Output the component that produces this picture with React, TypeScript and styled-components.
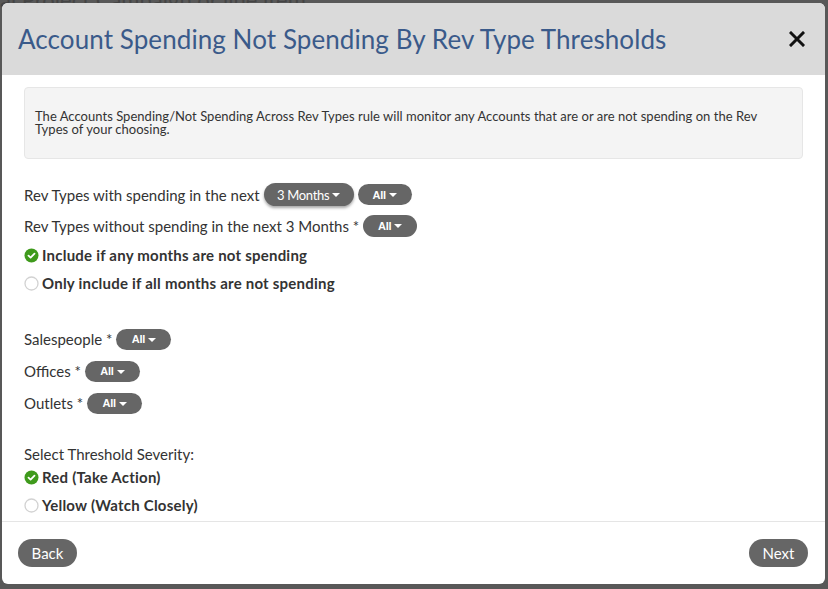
import React from "react";
import styled, { createGlobalStyle } from "styled-components";

const Global = createGlobalStyle`
  html, body { margin: 0; padding: 0; }
  body { background: #5a5a5a; font-family: Lato, "Open Sans", sans-serif; color: #333; overflow: hidden; }
`;

const Backdrop = styled.div`
  position: relative;
  width: 828px;
  height: 589px;
  box-sizing: border-box;
  padding: 3px 3px 5px 2px;
  background: #585858;
  display: flex;
`;

const BehindText = styled.div`
  position: absolute;
  left: 0;
  top: -14px;
  font-size: 22px;
  color: #444;
  white-space: nowrap;
`;

const Modal = styled.div`
  position: relative;
  flex: 1;
  display: flex;
  flex-direction: column;
  background: #fff;
  border-radius: 6px;
  overflow: hidden;
`;

const Header = styled.div`
  height: 72px;
  flex: none;
  background: #dadada;
  display: flex;
  align-items: center;
  justify-content: space-between;
  padding: 0 18px 0 16px;
`;

const Title = styled.h1`
  margin: 0;
  font-family: Lato, sans-serif;
  font-weight: 400;
  font-size: 26px;
  color: #3a5a8a;
  letter-spacing: 0.08px;
`;

const Close = styled.button`
  border: 0;
  background: none;
  padding: 0;
  width: 20px;
  height: 20px;
  display: flex;
  align-items: center;
  justify-content: center;
  cursor: pointer;
`;

const Body = styled.div`
  flex: 1;
  padding: 12px 22px 0 22px;
  display: flex;
  flex-direction: column;
`;

const Info = styled.div`
  height: 72px;
  box-sizing: border-box;
  background: #f4f4f4;
  border: 1px solid #e6e6e6;
  border-radius: 4px;
  padding: 22px 10px 0 10px;
  font-size: 13px;
  line-height: 13px;
  color: #333;
  margin-bottom: 20px;
  letter-spacing: 0.03px;
`;

const InfoLine = styled.div`
  height: 13px;
`;

const Row = styled.div<{ $h: number; $mt?: number }>`
  height: ${(p) => p.$h}px;
  margin-top: ${(p) => p.$mt ?? 0}px;
  display: flex;
  align-items: center;
  font-size: 15px;
  color: #333;
  white-space: nowrap;
`;

const Label = styled.span`
  margin-right: 4px;
`;

const Radio = styled.span`
  display: flex;
  align-items: center;
  gap: 3px;
  font-weight: 700;
  letter-spacing: 0.22px;
`;

const Pill = styled.button<{ $w: number; $h?: number; $shadow?: boolean; $size?: number }>`
  width: ${(p) => p.$w}px;
  height: ${(p) => p.$h ?? 21}px;
  border: 0;
  border-radius: 12px;
  background: #666;
  color: #fff;
  font-family: ${(p) => (p.$size ? "Lato, sans-serif" : '"Liberation Sans", Arial, sans-serif')};
  font-size: ${(p) => p.$size ?? 11}px;
  font-weight: ${(p) => (p.$size ? 400 : 700)};
  display: inline-flex;
  align-items: center;
  justify-content: center;
  gap: 3px;
  padding: 0;
  margin-right: 4px;
  box-shadow: ${(p) => (p.$shadow ? "0 2px 3px rgba(0,0,0,0.35)" : "none")};
  letter-spacing: -0.3px;
`;

const Caret = styled.span`
  width: 0;
  height: 0;
  border-left: 4px solid transparent;
  border-right: 4px solid transparent;
  border-top: 4px solid #fff;
  margin-top: 1px;
`;

const Footer = styled.div`
  flex: none;
  height: 63px;
  box-sizing: border-box;
  border-top: 1px solid #e5e5e5;
  display: flex;
  justify-content: space-between;
  align-items: flex-start;
  padding: 17px 17px 0 16px;
`;

const FootBtn = styled.button`
  height: 28px;
  width: 59px;
  border: 0;
  border-radius: 14px;
  background: #666;
  color: #fff;
  font-family: Lato, sans-serif;
  font-size: 15px;
  padding: 0;
`;

const Check = () => (
  <svg width="15" height="15" viewBox="0 0 15 15">
    <circle cx="7.5" cy="7.5" r="7" fill="#3f9a1c" />
    <path d="M4.5 7.7 L6.6 9.6 L10.5 5.6" stroke="#fff" strokeWidth="1.8" fill="none" strokeLinecap="round" strokeLinejoin="round" />
  </svg>
);

const Empty = () => (
  <svg width="15" height="15" viewBox="0 0 15 15">
    <circle cx="7.5" cy="7.5" r="6.5" fill="#fff" stroke="#d2d2d2" strokeWidth="1.3" />
  </svg>
);

const Sel = ({ w, h, shadow, size, text = "All" }: { w: number; h?: number; shadow?: boolean; size?: number; text?: string }) => (
  <Pill $w={w} $h={h} $shadow={shadow} $size={size}>
    {text}
    <Caret />
  </Pill>
);

export default function App() {
  return (
    <>
      <Global />
      <Backdrop>
        <BehindText>al Project Campaign or line item</BehindText>
        <Modal>
          <Header>
            <Title>Account Spending Not Spending By Rev Type Thresholds</Title>
            <Close aria-label="close">
              <svg width="16" height="16" viewBox="0 0 16 16">
                <path d="M2 2 L14 14 M14 2 L2 14" stroke="#111" strokeWidth="3" strokeLinecap="square" />
              </svg>
            </Close>
          </Header>
          <Body>
            <Info>
              <InfoLine>The Accounts Spending/Not Spending Across Rev Types rule will monitor any Accounts that are or are not spending on the Rev</InfoLine>
              <InfoLine>Types of your choosing.</InfoLine>
            </Info>
            <Row $h={31}>
              <Label>Rev Types with spending in the next</Label>
              <Sel w={90} h={23} shadow size={13} text="3 Months" />
              <Sel w={54} />
            </Row>
            <Row $h={31}>
              <Label>Rev Types without spending in the next 3 Months *</Label>
              <Sel w={54} h={22} />
            </Row>
            <Row $h={28}>
              <Radio>
                <Check />
                Include if any months are not spending
              </Radio>
            </Row>
            <Row $h={28}>
              <Radio>
                <Empty />
                Only include if all months are not spending
              </Radio>
            </Row>
            <Row $h={32} $mt={26}>
              <Label>Salespeople *</Label>
              <Sel w={55} />
            </Row>
            <Row $h={32}>
              <Label>Offices *</Label>
              <Sel w={55} />
            </Row>
            <Row $h={32}>
              <Label>Outlets *</Label>
              <Sel w={55} />
            </Row>
            <Row $h={18} $mt={26}>
              <Label>Select Threshold Severity:</Label>
            </Row>
            <Row $h={28}>
              <Radio>
                <Check />
                Red (Take Action)
              </Radio>
            </Row>
            <Row $h={28}>
              <Radio>
                <Empty />
                Yellow (Watch Closely)
              </Radio>
            </Row>
          </Body>
          <Footer>
            <FootBtn>Back</FootBtn>
            <FootBtn>Next</FootBtn>
          </Footer>
        </Modal>
      </Backdrop>
    </>
  );
}
